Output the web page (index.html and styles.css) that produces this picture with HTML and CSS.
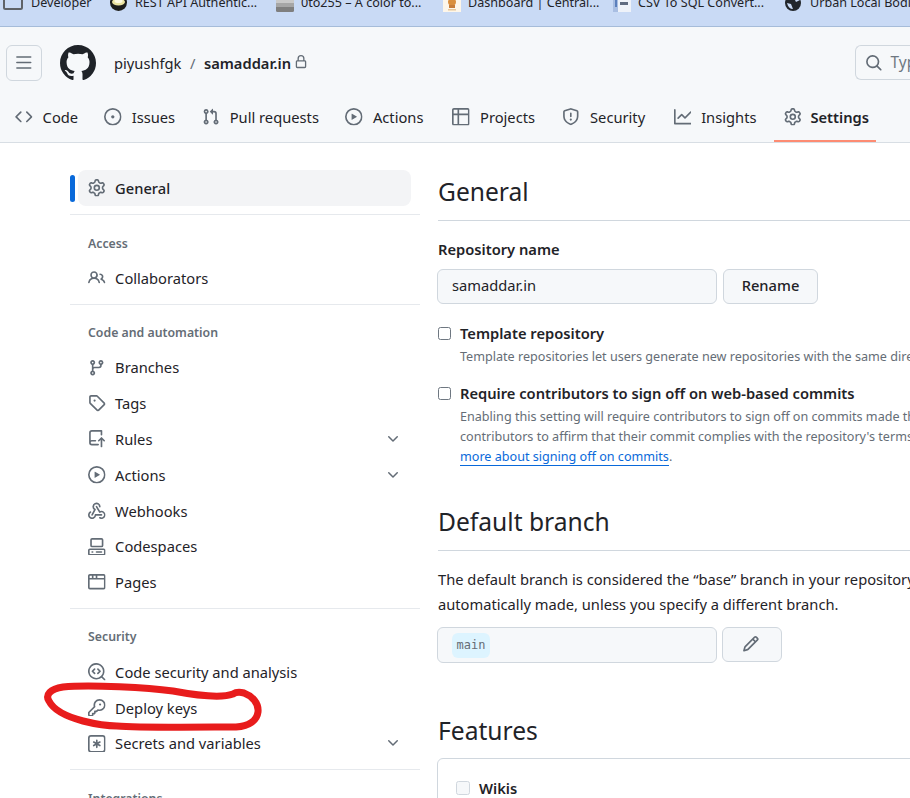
FILE: index.html
```html
<!DOCTYPE html>
<html lang="en">
<head>
<meta charset="utf-8">
<title>samaddar.in settings</title>
<link rel="stylesheet" href="styles.css">
</head>
<body>
<svg class="defs" width="0" height="0" aria-hidden="true">
<symbol id="i-bars" viewBox="0 0 16 16"><path d="M1 2.75A.75.75 0 0 1 1.75 2h12.5a.75.75 0 0 1 0 1.5H1.75A.75.75 0 0 1 1 2.75Zm0 5A.75.75 0 0 1 1.75 7h12.5a.75.75 0 0 1 0 1.5H1.75A.75.75 0 0 1 1 7.75ZM1.75 12h12.5a.75.75 0 0 1 0 1.5H1.75a.75.75 0 0 1 0-1.5Z"/></symbol>
<symbol id="i-mark" viewBox="0 0 16 16"><path d="M8 0c4.42 0 8 3.58 8 8a8.013 8.013 0 0 1-5.45 7.59c-.4.08-.55-.17-.55-.38 0-.27.01-1.13.01-2.2 0-.75-.25-1.23-.54-1.48 1.78-.2 3.65-.88 3.65-3.95 0-.88-.31-1.59-.82-2.15.08-.2.36-1.02-.08-2.12 0 0-.67-.22-2.2.82-.64-.18-1.32-.27-2-.27-.68 0-1.36.09-2 .27-1.53-1.03-2.2-.82-2.2-.82-.44 1.1-.16 1.92-.08 2.12-.51.56-.82 1.28-.82 2.15 0 3.06 1.86 3.75 3.64 3.95-.23.2-.44.55-.51 1.07-.46.21-1.61.55-2.33-.66-.15-.24-.6-.83-1.23-.82-.67.01-.27.38.01.53.34.19.73.9.82 1.13.16.45.68 1.31 2.69.94 0 .67.01 1.3.01 1.49 0 .21-.15.45-.55.38A7.995 7.995 0 0 1 0 8c0-4.42 3.58-8 8-8Z"/></symbol>
<symbol id="i-lock" viewBox="0 0 16 16"><path d="M4 4a4 4 0 0 1 8 0v2h.25c.966 0 1.75.784 1.75 1.75v5.5A1.75 1.75 0 0 1 12.25 15h-8.5A1.75 1.75 0 0 1 2 13.25v-5.5C2 6.784 2.784 6 3.75 6H4Zm8.25 3.5h-8.5a.25.25 0 0 0-.25.25v5.5c0 .138.112.25.25.25h8.5a.25.25 0 0 0 .25-.25v-5.5a.25.25 0 0 0-.25-.25ZM10.5 6V4a2.5 2.5 0 1 0-5 0v2Z"/></symbol>
<symbol id="i-search" viewBox="0 0 16 16"><path d="M10.68 11.74a6 6 0 0 1-7.922-8.982 6 6 0 0 1 8.982 7.922l3.04 3.04a.749.749 0 0 1-.326 1.275.749.749 0 0 1-.734-.215ZM11.5 7a4.499 4.499 0 1 0-8.997 0A4.499 4.499 0 0 0 11.5 7Z"/></symbol>
<symbol id="i-code" viewBox="0 0 16 16"><path d="m11.28 3.22 4.25 4.25a.75.75 0 0 1 0 1.06l-4.25 4.25a.749.749 0 0 1-1.275-.326.749.749 0 0 1 .215-.734L13.94 8l-3.72-3.72a.749.749 0 0 1 .326-1.275.749.749 0 0 1 .734.215Zm-6.56 0a.751.751 0 0 1 1.042.018.751.751 0 0 1 .018 1.042L2.06 8l3.72 3.72a.749.749 0 0 1-.326 1.275.749.749 0 0 1-.734-.215L.47 8.53a.75.75 0 0 1 0-1.06Z"/></symbol>
<symbol id="i-issue" viewBox="0 0 16 16"><path d="M8 9.5a1.5 1.5 0 1 0 0-3 1.5 1.5 0 0 0 0 3Z"/><path d="M8 0a8 8 0 1 1 0 16A8 8 0 0 1 8 0ZM1.5 8a6.5 6.5 0 1 0 13 0 6.5 6.5 0 0 0-13 0Z"/></symbol>
<symbol id="i-pr" viewBox="0 0 16 16"><path d="M1.5 3.25a2.25 2.25 0 1 1 3 2.122v5.256a2.251 2.251 0 1 1-1.5 0V5.372A2.25 2.25 0 0 1 1.5 3.25Zm5.677-.177L9.573.677A.25.25 0 0 1 10 .854V2.5h1A2.5 2.5 0 0 1 13.5 5v5.628a2.251 2.251 0 1 1-1.5 0V5a1 1 0 0 0-1-1h-1v1.646a.25.25 0 0 1-.427.177L7.177 3.427a.25.25 0 0 1 0-.354ZM3.75 2.5a.75.75 0 1 0 0 1.5.75.75 0 0 0 0-1.5Zm0 9.5a.75.75 0 1 0 0 1.5.75.75 0 0 0 0-1.5Zm8.25.75a.75.75 0 1 0 1.5 0 .75.75 0 0 0-1.5 0Z"/></symbol>
<symbol id="i-play" viewBox="0 0 16 16"><path d="M8 0a8 8 0 1 1 0 16A8 8 0 0 1 8 0ZM1.5 8a6.5 6.5 0 1 0 13 0 6.5 6.5 0 0 0-13 0Zm4.879-2.773 4.264 2.559a.25.25 0 0 1 0 .428l-4.264 2.559A.25.25 0 0 1 6 10.559V5.442a.25.25 0 0 1 .379-.215Z"/></symbol>
<symbol id="i-table" viewBox="0 0 16 16"><path d="M0 1.75C0 .784.784 0 1.75 0h12.5C15.216 0 16 .784 16 1.75v12.5A1.75 1.75 0 0 1 14.25 16H1.75A1.75 1.75 0 0 1 0 14.25ZM6.5 6.5v8h7.75a.25.25 0 0 0 .25-.25V6.5Zm8-1.5V1.75a.25.25 0 0 0-.25-.25H6.5V5ZM5 5V1.5H1.75a.25.25 0 0 0-.25.25V5ZM1.5 6.5v7.75c0 .138.112.25.25.25H5v-8Z"/></symbol>
<symbol id="i-shield" viewBox="0 0 16 16"><path d="M7.467.133a1.748 1.748 0 0 1 1.066 0l5.25 1.68A1.75 1.75 0 0 1 15 3.48V7c0 1.566-.32 3.182-1.303 4.682-.983 1.498-2.585 2.813-5.032 3.855a1.697 1.697 0 0 1-1.33 0c-2.447-1.042-4.049-2.357-5.032-3.855C1.32 10.182 1 8.566 1 7V3.48a1.75 1.75 0 0 1 1.217-1.667Zm.61 1.429a.25.25 0 0 0-.153 0l-5.25 1.68a.25.25 0 0 0-.174.238V7c0 1.358.275 2.666 1.057 3.86.784 1.194 2.121 2.34 4.366 3.297a.196.196 0 0 0 .154 0c2.245-.956 3.582-2.104 4.366-3.298C13.225 9.666 13.5 8.36 13.5 7V3.48a.251.251 0 0 0-.174-.237l-5.25-1.68ZM8.75 4.75v3a.75.75 0 0 1-1.5 0v-3a.75.75 0 0 1 1.5 0ZM9 10.5a1 1 0 1 1-2 0 1 1 0 0 1 2 0Z"/></symbol>
<symbol id="i-graph" viewBox="0 0 16 16"><path d="M1.5 1.75V13.5h13.75a.75.75 0 0 1 0 1.5H.75a.75.75 0 0 1-.75-.75V1.75a.75.75 0 0 1 1.5 0Zm14.28 2.53-5.25 5.25a.75.75 0 0 1-1.06 0L7 7.06 4.28 9.78a.751.751 0 0 1-1.042-.018.751.751 0 0 1-.018-1.042l3.25-3.25a.75.75 0 0 1 1.06 0L10 7.94l4.72-4.72a.751.751 0 0 1 1.042.018.751.751 0 0 1 .018 1.042Z"/></symbol>
<symbol id="i-gear" viewBox="0 0 16 16"><path d="M8 0a8.2 8.2 0 0 1 .701.031C9.444.095 9.99.645 10.16 1.29l.288 1.107c.018.066.079.158.212.224.231.114.454.243.668.386.123.082.233.09.299.071l1.103-.303c.644-.176 1.392.021 1.82.63.27.385.506.792.704 1.218.315.675.111 1.422-.364 1.891l-.814.806c-.049.048-.098.147-.088.294.016.257.016.515 0 .772-.01.147.038.246.088.294l.814.806c.475.469.679 1.216.364 1.891a7.977 7.977 0 0 1-.704 1.217c-.428.61-1.176.807-1.82.63l-1.102-.302c-.067-.019-.177-.011-.3.071a5.909 5.909 0 0 1-.668.386c-.133.066-.194.158-.211.224l-.29 1.106c-.168.646-.715 1.196-1.458 1.26a8.006 8.006 0 0 1-1.402 0c-.743-.064-1.289-.614-1.458-1.26l-.289-1.106c-.018-.066-.079-.158-.212-.224a5.738 5.738 0 0 1-.668-.386c-.123-.082-.233-.09-.299-.071l-1.103.303c-.644.176-1.392-.021-1.82-.63a8.12 8.12 0 0 1-.704-1.218c-.315-.675-.111-1.422.363-1.891l.815-.806c.05-.048.098-.147.088-.294a6.214 6.214 0 0 1 0-.772c.01-.147-.038-.246-.088-.294l-.815-.806C.635 6.045.431 5.298.746 4.623a7.92 7.92 0 0 1 .704-1.217c.428-.61 1.176-.807 1.82-.63l1.102.302c.067.019.177.011.3-.071.214-.143.437-.272.668-.386.133-.066.194-.158.211-.224l.29-1.106C6.009.645 6.556.095 7.299.03 7.53.01 7.764 0 8 0Zm-.571 1.525c-.036.003-.108.036-.137.146l-.289 1.105c-.147.561-.549.967-.998 1.189-.173.086-.34.183-.5.29-.417.278-.97.423-1.529.27l-1.103-.303c-.109-.03-.175.016-.195.045-.22.312-.412.644-.573.99-.014.031-.021.11.059.19l.815.806c.411.406.562.957.53 1.456a4.709 4.709 0 0 0 0 .582c.032.499-.119 1.05-.53 1.456l-.815.806c-.081.08-.073.159-.059.19.162.346.353.677.573.989.02.03.085.076.195.046l1.102-.303c.56-.153 1.113-.008 1.53.27.161.107.328.204.501.29.447.222.85.629.997 1.189l.289 1.105c.029.109.101.143.137.146a6.6 6.6 0 0 0 1.142 0c.036-.003.108-.036.137-.146l.289-1.105c.147-.561.549-.967.998-1.189.173-.086.34-.183.5-.29.417-.278.97-.423 1.529-.27l1.103.303c.109.029.175-.016.195-.045.22-.313.411-.644.573-.99.014-.031.021-.11-.059-.19l-.815-.806c-.411-.406-.562-.957-.53-1.456a4.709 4.709 0 0 0 0-.582c-.032-.499.119-1.05.53-1.456l.815-.806c.081-.08.073-.159.059-.19a6.464 6.464 0 0 0-.573-.989c-.02-.03-.085-.076-.195-.046l-1.102.303c-.56.153-1.113.008-1.53-.27a4.44 4.44 0 0 0-.501-.29c-.447-.222-.85-.629-.997-1.189l-.289-1.105c-.029-.11-.101-.143-.137-.146a6.6 6.6 0 0 0-1.142 0ZM11 8a3 3 0 1 1-6 0 3 3 0 0 1 6 0ZM9.5 8a1.5 1.5 0 1 0-3.001.001A1.5 1.5 0 0 0 9.5 8Z"/></symbol>
<symbol id="i-people" viewBox="0 0 16 16"><path d="M2 5.5a3.5 3.5 0 1 1 5.898 2.549 5.508 5.508 0 0 1 3.034 4.084.75.75 0 1 1-1.482.235 4 4 0 0 0-7.9 0 .75.75 0 0 1-1.482-.236A5.507 5.507 0 0 1 3.102 8.05 3.493 3.493 0 0 1 2 5.5ZM11 4a3.001 3.001 0 0 1 2.22 5.018 5.01 5.01 0 0 1 2.56 3.012.749.749 0 0 1-.885.954.752.752 0 0 1-.549-.514 3.507 3.507 0 0 0-2.522-2.372.75.75 0 0 1-.574-.73v-.352a.75.75 0 0 1 .416-.672A1.5 1.5 0 0 0 11 5.5.75.75 0 0 1 11 4Zm-5.5-.5a2 2 0 1 0-.001 3.999A2 2 0 0 0 5.5 3.5Z"/></symbol>
<symbol id="i-branch" viewBox="0 0 16 16"><path d="M9.5 3.25a2.25 2.25 0 1 1 3 2.122V6A2.5 2.5 0 0 1 10 8.5H6a1 1 0 0 0-1 1v1.128a2.251 2.251 0 1 1-1.5 0V5.372a2.25 2.25 0 1 1 1.5 0v1.836A2.493 2.493 0 0 1 6 7h4a1 1 0 0 0 1-1v-.628A2.25 2.25 0 0 1 9.5 3.25Zm-6 0a.75.75 0 1 0 1.5 0 .75.75 0 0 0-1.5 0Zm8.25-.75a.75.75 0 1 0 0 1.5.75.75 0 0 0 0-1.5ZM4.25 12a.75.75 0 1 0 0 1.5.75.75 0 0 0 0-1.5Z"/></symbol>
<symbol id="i-tag" viewBox="0 0 16 16"><path d="M1 7.775V2.75C1 1.784 1.784 1 2.75 1h5.025c.464 0 .91.184 1.238.513l6.25 6.25a1.75 1.75 0 0 1 0 2.474l-5.026 5.026a1.75 1.75 0 0 1-2.474 0l-6.25-6.25A1.752 1.752 0 0 1 1 7.775Zm1.5 0c0 .066.026.13.073.177l6.25 6.25a.25.25 0 0 0 .354 0l5.025-5.025a.25.25 0 0 0 0-.354l-6.25-6.25a.25.25 0 0 0-.177-.073H2.75a.25.25 0 0 0-.25.25ZM6 5a1 1 0 1 1 0 2 1 1 0 0 1 0-2Z"/></symbol>
<symbol id="i-push" viewBox="0 0 16 16"><path d="M1 2.5A2.5 2.5 0 0 1 3.5 0h8.75a.75.75 0 0 1 .75.75v3.5a.75.75 0 0 1-1.5 0V1.5h-8a1 1 0 0 0-1 1v6.708A2.493 2.493 0 0 1 3.5 9h3.25a.75.75 0 0 1 0 1.5H3.5a1 1 0 0 0 0 2h5.75a.75.75 0 0 1 0 1.5H3.5A2.5 2.5 0 0 1 1 11.5Zm13.23 7.79h-.001l-1.224-1.224v6.184a.75.75 0 0 1-1.5 0V9.066L10.28 10.29a.75.75 0 0 1-1.06-1.061l2.505-2.504a.75.75 0 0 1 1.06 0L15.29 9.23a.751.751 0 0 1-.018 1.042.751.751 0 0 1-1.042.018Z"/></symbol>
<symbol id="i-webhook" viewBox="0 0 16 16"><path d="M5.5 4.25a2.25 2.25 0 0 1 4.5 0 .75.75 0 0 0 1.5 0 3.75 3.75 0 1 0-6.14 2.889l-2.272 4.258a.75.75 0 0 0 1.324.706L7 7.25a.75.75 0 0 0-.309-1.015A2.25 2.25 0 0 1 5.5 4.25Z"/><path d="M7.364 3.607a.75.75 0 0 1 1.03.257l2.608 4.349a3.75 3.75 0 1 1-.628 6.785.75.75 0 0 1 .752-1.299 2.25 2.25 0 1 0-.033-3.88.75.75 0 0 1-1.03-.256L7.107 4.636a.75.75 0 0 1 .257-1.03Z"/><path d="M2.9 8.776A.75.75 0 0 1 2.625 9.8 2.25 2.25 0 1 0 6 11.75a.75.75 0 0 1 .75-.751h5.5a.75.75 0 0 1 0 1.5H7.425a3.751 3.751 0 1 1-5.55-3.998.75.75 0 0 1 1.024.274Z"/></symbol>
<symbol id="i-codespaces" viewBox="0 0 16 16"><path d="M0 11.25c0-.966.784-1.75 1.75-1.75h12.5c.966 0 1.75.784 1.75 1.75v3A1.75 1.75 0 0 1 14.25 16H1.75A1.75 1.75 0 0 1 0 14.25Zm2-9.5C2 .784 2.784 0 3.75 0h8.5C13.216 0 14 .784 14 1.75v5a1.75 1.75 0 0 1-1.75 1.75h-8.5A1.75 1.75 0 0 1 2 6.75Zm1.75-.25a.25.25 0 0 0-.25.25v5c0 .138.112.25.25.25h8.5a.25.25 0 0 0 .25-.25v-5a.25.25 0 0 0-.25-.25Zm-2 9.5a.25.25 0 0 0-.25.25v3c0 .138.112.25.25.25h12.5a.25.25 0 0 0 .25-.25v-3a.25.25 0 0 0-.25-.25Z"/><path d="M7 12.75a.75.75 0 0 1 .75-.75h4.5a.75.75 0 0 1 0 1.5h-4.5a.75.75 0 0 1-.75-.75Zm-4 0a.75.75 0 0 1 .75-.75h.5a.75.75 0 0 1 0 1.5h-.5a.75.75 0 0 1-.75-.75Z"/></symbol>
<symbol id="i-browser" viewBox="0 0 16 16"><path d="M0 2.75C0 1.784.784 1 1.75 1h12.5c.966 0 1.75.784 1.75 1.750v10.5A1.75 1.75 0 0 1 14.25 15H1.75A1.75 1.75 0 0 1 0 13.25ZM14.5 6h-13v7.25c0 .138.112.25.25.25h12.5a.25.25 0 0 0 .25-.25Zm-6-3.5v2h6V2.75a.25.25 0 0 0-.25-.25ZM5 2.5v2h2v-2Zm-3.25 0a.25.25 0 0 0-.25.25V4.5h2v-2Z"/></symbol>
<symbol id="i-codescan" viewBox="0 0 16 16"><path d="M8.47 4.97a.75.75 0 0 0 0 1.06L9.94 7.5 8.47 8.97a.75.75 0 1 0 1.06 1.06l2-2a.75.75 0 0 0 0-1.06l-2-2a.75.75 0 0 0-1.06 0ZM6.53 6.03a.75.75 0 0 0-1.06-1.06l-2 2a.75.75 0 0 0 0 1.06l2 2a.75.75 0 1 0 1.06-1.06L5.06 7.5l1.47-1.47Z"/><path d="M12.246 13.307a7.501 7.501 0 1 1 1.06-1.06l2.474 2.473a.749.749 0 0 1-.326 1.275.749.749 0 0 1-.734-.215ZM1.5 7.5a6.002 6.002 0 0 0 3.608 5.504 6.002 6.002 0 0 0 6.486-1.117.75.75 0 0 1 .293-.293A6.002 6.002 0 0 0 7.5 1.5a6 6 0 0 0-6 6Z"/></symbol>
<symbol id="i-key" viewBox="0 0 16 16"><path d="M10.5 0a5.499 5.499 0 1 1-1.288 10.848l-.932.932a.749.749 0 0 1-.53.22H7v.75a.749.749 0 0 1-.22.53l-.5.5a.749.749 0 0 1-.53.22H5v.75a.749.749 0 0 1-.22.53l-.5.5a.749.749 0 0 1-.53.22h-2A1.75 1.75 0 0 1 0 14.25v-2c0-.199.079-.389.22-.53l4.932-4.932A5.5 5.5 0 0 1 10.5 0Zm-4 5.5c-.001.431.069.86.205 1.269a.75.75 0 0 1-.181.768L1.5 12.56v1.69c0 .138.112.25.25.25h1.69l.06-.06v-1.19a.75.75 0 0 1 .75-.75h1.19l.06-.06v-1.19a.75.75 0 0 1 .75-.75h1.19l1.023-1.025a.75.75 0 0 1 .768-.18A4 4 0 1 0 6.5 5.5ZM11 6a1 1 0 1 1 0-2 1 1 0 0 1 0 2Z"/></symbol>
<symbol id="i-asterisk" viewBox="0 0 16 16"><path d="M0 2.75A2.75 2.75 0 0 1 2.75 0h10.5A2.75 2.75 0 0 1 16 2.75v10.5A2.75 2.75 0 0 1 13.25 16H2.75A2.75 2.75 0 0 1 0 13.25ZM2.75 1.5c-.69 0-1.25.56-1.25 1.25v10.5c0 .69.56 1.25 1.25 1.25h10.5c.69 0 1.25-.56 1.25-1.25V2.75c0-.69-.56-1.25-1.25-1.25Z"/><path d="M8 4a.75.75 0 0 1 .75.75V6.7l1.69-.975a.75.75 0 0 1 .75 1.3L9.5 8l1.69.976a.75.75 0 0 1-.75 1.298L8.75 9.3v1.951a.75.75 0 0 1-1.5 0V9.299l-1.69.976a.75.75 0 0 1-.75-1.3L6.5 8l-1.69-.975a.75.75 0 0 1 .75-1.3l1.69.976V4.75A.75.75 0 0 1 8 4Z"/></symbol>
<symbol id="i-chevron" viewBox="0 0 16 16"><path d="M12.78 5.22a.749.749 0 0 1 0 1.06l-4.25 4.25a.749.749 0 0 1-1.06 0L3.22 6.28a.749.749 0 1 1 1.06-1.06L8 8.939l3.72-3.719a.749.749 0 0 1 1.06 0Z"/></symbol>
<symbol id="i-pencil" viewBox="0 0 16 16"><path d="M11.013 1.427a1.75 1.75 0 0 1 2.474 0l1.086 1.086a1.75 1.75 0 0 1 0 2.474l-8.61 8.61c-.21.21-.47.364-.756.445l-3.251.93a.75.75 0 0 1-.927-.928l.929-3.25c.081-.286.235-.547.445-.758l8.61-8.61Zm.176 4.823L9.75 4.81l-6.286 6.287a.253.253 0 0 0-.064.108l-.558 1.953 1.953-.558a.253.253 0 0 0 .108-.064Zm1.238-3.763a.25.25 0 0 0-.354 0L10.811 3.75l1.439 1.44 1.263-1.263a.25.25 0 0 0 0-.354Z"/></symbol>
</svg>

<div class="bookmarks">
  <div class="bm"><svg class="bm-ico wide" viewBox="0 0 20 18"><path class="folder" d="M1 2h18v12.500a1.500 1.500 0 0 1-1.500 1.500h-15A1.500 1.500 0 0 1 1 14.500Z"/></svg><span>Developer</span></div>
  <div class="bm"><svg class="bm-ico" viewBox="0 0 18 18"><circle cx="8.500" cy="9.500" r="8.500" fill="#1d1d1b"/><ellipse cx="8.500" cy="9" rx="6.500" ry="3.500" fill="#ebe3a0"/><ellipse cx="8.500" cy="8" rx="4" ry="2" fill="#fffbe0"/></svg><span>REST API Authentic...</span></div>
  <div class="bm"><svg class="bm-ico" viewBox="0 0 18 18"><path d="M0 5h18v5H0Z" fill="#c9c9c9"/><path d="M0 10h18v4H0Z" fill="#a6a6a6"/><path d="M0 14h18v3.500a1.500 1.500 0 0 1-1.500 1.500h-15A1.500 1.500 0 0 1 0 17.500Z" fill="#7f7f7f"/></svg><span>0to255 – A color to...</span></div>
  <div class="bm"><svg class="bm-ico" viewBox="0 0 18 18"><rect y="5" width="18" height="14" fill="#fdf6ea"/><ellipse cx="9" cy="9" rx="4" ry="3.500" fill="#d98f3e"/><rect x="6" y="12" width="6" height="3" fill="#c77d3a"/><rect x="5" y="16" width="8" height="1.500" fill="#e8c79a"/></svg><span>Dashboard | Central...</span></div>
  <div class="bm"><svg class="bm-ico" viewBox="0 0 18 18"><rect y="5" width="18" height="14" fill="#eef2f9"/><rect y="5" width="5" height="14" fill="#a9bee2"/><rect x="2" y="5" width="2" height="9" fill="#5b7fbc"/><rect x="7" y="9" width="8" height="3" fill="#5f6b80"/></svg><span>CSV To SQL Convert...</span></div>
  <div class="bm"><svg class="bm-ico" viewBox="0 0 18 18"><circle cx="8" cy="10" r="8" fill="#22262b"/><path d="M9 3c3 .5 5 2 6 4l-4 2c-1-2-2-4-2-6ZM2 10l4 1 2 5c-3 0-5-2-6-6Z" fill="#c9daf5"/></svg><span>Urban Local Bodi</span></div>
</div>

<header class="app-header">
  <div class="top-row">
    <button class="menu-btn" type="button"><svg class="ico"><use href="#i-bars"/></svg></button>
    <svg class="logo"><use href="#i-mark"/></svg>
    <nav class="crumbs">
      <span>piyushfgk</span>
      <span class="slash">/</span>
      <strong>samaddar.in</strong>
      <svg class="lock"><use href="#i-lock"/></svg>
    </nav>
    <div class="search"><svg class="ico"><use href="#i-search"/></svg><span>Type</span></div>
  </div>
  <nav class="tabs">
    <a class="tab t-code"><svg class="ico"><use href="#i-code"/></svg>Code</a>
    <a class="tab t-issues"><svg class="ico"><use href="#i-issue"/></svg>Issues</a>
    <a class="tab t-pr"><svg class="ico"><use href="#i-pr"/></svg>Pull requests</a>
    <a class="tab t-actions"><svg class="ico"><use href="#i-play"/></svg>Actions</a>
    <a class="tab t-projects"><svg class="ico"><use href="#i-table"/></svg>Projects</a>
    <a class="tab t-security"><svg class="ico"><use href="#i-shield"/></svg>Security</a>
    <a class="tab t-insights"><svg class="ico"><use href="#i-graph"/></svg>Insights</a>
    <a class="tab t-settings active"><svg class="ico"><use href="#i-gear"/></svg>Settings</a>
  </nav>
</header>

<div class="layout">
  <aside class="side">
    <div class="group first">
      <a class="item current"><svg class="ico"><use href="#i-gear"/></svg>General</a>
    </div>
    <div class="group">
      <h3>Access</h3>
      <a class="item"><svg class="ico"><use href="#i-people"/></svg>Collaborators</a>
    </div>
    <div class="group">
      <h3>Code and automation</h3>
      <a class="item"><svg class="ico"><use href="#i-branch"/></svg>Branches</a>
      <a class="item"><svg class="ico"><use href="#i-tag"/></svg>Tags</a>
      <a class="item"><svg class="ico"><use href="#i-push"/></svg>Rules<svg class="chev"><use href="#i-chevron"/></svg></a>
      <a class="item"><svg class="ico"><use href="#i-play"/></svg>Actions<svg class="chev"><use href="#i-chevron"/></svg></a>
      <a class="item"><svg class="ico"><use href="#i-webhook"/></svg>Webhooks</a>
      <a class="item"><svg class="ico"><use href="#i-codespaces"/></svg>Codespaces</a>
      <a class="item"><svg class="ico"><use href="#i-browser"/></svg>Pages</a>
    </div>
    <div class="group">
      <h3>Security</h3>
      <a class="item"><svg class="ico"><use href="#i-codescan"/></svg>Code security and analysis</a>
      <a class="item"><svg class="ico"><use href="#i-key"/></svg>Deploy keys</a>
      <a class="item"><svg class="ico"><use href="#i-asterisk"/></svg>Secrets and variables<svg class="chev"><use href="#i-chevron"/></svg></a>
    </div>
    <div class="group">
      <h3>Integrations</h3>
    </div>
  </aside>

  <main class="content">
    <h2 class="title">General</h2>
    <label class="label">Repository name</label>
    <div class="field-row">
      <div class="input">samaddar.in</div>
      <button class="btn" type="button">Rename</button>
    </div>
    <div class="check first-check">
      <span class="box"></span>
      <div>
        <div class="check-title">Template repository</div>
        <p class="note">Template repositories let users generate new repositories with the same directory structure and files.</p>
      </div>
    </div>
    <div class="check second-check">
      <span class="box"></span>
      <div>
        <div class="check-title">Require contributors to sign off on web-based commits</div>
        <p class="note">Enabling this setting will require contributors to sign off on commits made through GitHub</p>
        <p class="note">contributors to affirm that their commit complies with the repository's terms, commonly</p>
        <p class="note"><a class="link">more about signing off on commits</a>.</p>
      </div>
    </div>

    <h2 class="title branch-title">Default branch</h2>
    <p class="para">The default branch is considered the “base” branch in your repository, against which all</p>
    <p class="para">automatically made, unless you specify a different branch.</p>
    <div class="field-row branch-row">
      <div class="input branch-input"><code class="chip">main</code></div>
      <button class="btn icon-btn" type="button"><svg class="ico"><use href="#i-pencil"/></svg></button>
    </div>

    <h2 class="title features-title">Features</h2>
    <section class="card">
      <span class="box disabled"></span>
      <span class="check-title">Wikis</span>
    </section>
  </main>
</div>

<svg class="scribble" viewBox="0 0 910 798" aria-hidden="true"><path d="M233 694C225 697 205 697 173 691C150 688 90 684 63 687C50 689 45 695 49 701C54 711 68 717 83 721C95 724 105 726 117 726C140 728 210 727 236 727C250 726 257 720 258 712C259 703 252 696 244 693C240 692 236 692 233 694Z"/></svg>
</body>
</html>
```
FILE: styles.css
```css
* { box-sizing: border-box; }
html, body { margin: 0; padding: 0; }
body {
  position: relative;
  width: 910px;
  height: 798px;
  overflow: hidden;
  background: #fff;
  color: #1f2328;
  font-family: "Noto Sans", "Liberation Sans", sans-serif;
  font-size: 14.7px;
}
.defs { position: absolute; }
svg { fill: currentColor; flex: none; }
p, h2, h3 { margin: 0; font-weight: 400; }
a { color: inherit; text-decoration: none; }
button { font-family: inherit; }

/* bookmarks */
.bookmarks {
  height: 27px;
  padding-left: 3px;
  background: #c9daf5;
  border-bottom: 1px solid #a6bcd9;
  display: grid;
  grid-template-columns: 107px 166px 167px 170px 172px 1fr;
  overflow: hidden;
  color: #1f2328;
  font-size: 12.6px;
}
.bm { display: flex; align-items: flex-start; gap: 7px; margin-top: -7px; white-space: nowrap; line-height: 20px; }
.bm-ico { width: 18px; height: 18px; overflow: visible; }
.bm-ico.wide { width: 20px; margin-right: 1px; }
.folder { fill: none; stroke: #5f6368; stroke-width: 2; }

/* header */
.app-header { height: 116px; background: #f6f8fa; border-bottom: 1px solid #d8dee4; }
.top-row { height: 69px; padding: 18px 0 0 6px; display: flex; align-items: flex-start; }
.menu-btn {
  width: 36px; height: 36px; padding: 0;
  display: flex; align-items: center; justify-content: center;
  background: transparent; border: 1px solid #d0d7de; border-radius: 6px; color: #636c76;
}
.ico { width: 17.6px; height: 17.6px; color: #636c76; }
.logo { width: 36px; height: 36px; margin-left: 18px; color: #1f2328; }
.crumbs { margin-left: 18px; height: 36px; display: flex; align-items: center; color: #1f2328; }
.slash { margin: 0 8.5px; color: #636c76; }
.crumbs strong { font-weight: 600; }
.lock { width: 14px; height: 14px; margin-left: 3px; margin-top: -3px; color: #636c76; }
.search {
  margin-left: auto; width: 56px; height: 35px; padding-left: 9px;
  margin-right: -1px;
  display: flex; align-items: center; gap: 8px;
  border: 1px solid #d0d7de; border-right: 0; border-radius: 6px 0 0 6px;
  overflow: hidden; color: #6e7781; white-space: nowrap; font-size: 15.4px;
}
.tabs { display: flex; height: 46px; padding-left: 15px; position: relative; }
.tab { display: flex; align-items: center; gap: 10px; height: 44px; padding-bottom: 2px; white-space: nowrap; }
.t-issues { margin-left: 26px; }
.t-pr { margin-left: 27px; }
.t-actions { margin-left: 26.4px; }
.t-projects { margin-left: 29px; }
.t-security { margin-left: 27.4px; }
.t-insights { margin-left: 28.4px; }
.t-settings { margin-left: 27.4px; }
.tab.active { font-weight: 600; position: relative; gap: 9px; }
.tab.active::after {
  content: ""; position: absolute; left: -10px; right: -7px; bottom: -2px; height: 2px;
  background: #fd8c73;
}

/* layout */
.layout { display: flex; padding-top: 27px; }
.side { width: 350px; margin-left: 70px; flex: none; }
.group { border-top: 1px solid #e6e9ed; padding-top: 8px; padding-bottom: 7.3px; }
.group.first { border-top: 0; padding: 0 0 8px; }
.group h3 { font-size: 12.3px; font-weight: 600; color: #656d76; padding: 10.5px 0 0 18px; line-height: 20px; height: 37.5px; }
.item { display: flex; align-items: center; gap: 9.5px; height: 35.8px; padding: 0 19px 1px 18px; }
.chev { width: 16px; height: 16px; margin-left: auto; color: #636c76; }
.item.current {
  position: relative; margin-left: 8px; padding: 0 0 0 10px; width: 333px;
  height: 36px; background: #f3f4f6; border-radius: 8px; font-weight: 500;
}
.item.current::before {
  content: ""; position: absolute; left: -8px; top: 5px; width: 5px; height: 27px;
  background: #0969da; border-radius: 6px;
}

/* main */
.content { margin-left: 17px; padding-left: 1px; flex: 1; min-width: 0; overflow: hidden; white-space: nowrap; }
.title { font-size: 24.6px; line-height: 36px; height: 51px; padding-top: 4px; border-bottom: 1px solid #d0d7de; color: #1f2328; }
.label { display: block; margin-top: 17px; font-weight: 600; line-height: 22px; }
.field-row { display: flex; gap: 6px; margin-top: 9px; margin-left: -1px; }
.input {
  width: 280px; height: 35px; padding-left: 14px; line-height: 31px;
  background: #f6f8fa; border: 1px solid #d0d7de; border-radius: 6px;
}
.btn {
  width: 95px; height: 35px; padding: 0 0 3px; font-size: 14.7px; font-weight: 500; color: #1f2328;
  background: #f6f8fa; border: 1px solid #d0d7de; border-radius: 6px;
}
.check { display: flex; gap: 9px; }
.first-check { margin-top: 18px; }
.second-check { margin-top: 15px; }
.box {
  width: 13px; height: 13px; margin-top: 5px; flex: none; background: #fff;
  border: 1px solid #6e7781; border-radius: 2.5px;
}
.box.disabled { border-color: #d0d7de; background: #f6f8fa; }
.check-title { font-weight: 600; line-height: 22px; display: block; }
.check-title + .note { margin-top: 3px; }
.note { font-size: 12.6px; line-height: 20px; color: #656d76; }
.link { color: #0969da; border-bottom: 1px solid #0969da; }
.branch-title { margin-top: 33px; }
.para { line-height: 25px; }
.branch-title + .para { margin-top: 16px; }
.branch-row { margin-top: 10px; gap: 5px; align-items: flex-start; }
.branch-input { height: 36px; padding-left: 14px; display: flex; align-items: center; }
.chip {
  display: block; width: 38px; height: 25px; line-height: 25px; text-align: center;
  background: #ddf4ff; border-radius: 6px; color: #656d76;
  font-family: "DejaVu Sans Mono", "Liberation Mono", monospace; font-size: 12px;
}
.icon-btn { width: 60px; display: flex; align-items: center; justify-content: center; padding: 0 3px 2px 0; }
.features-title { margin-top: 46px; border-bottom: 0; height: 49px; }
.card {
  width: 600px; height: 60px; padding: 15px 18px; margin-left: -1px;
  border: 1px solid #d0d7de; border-radius: 6px;
  display: flex; gap: 9px; align-items: flex-start;
}
.card .box { width: 14px; height: 14px; margin-top: 7px; }
.card .check-title { margin-top: 3px; }

/* annotation */
.scribble {
  position: absolute; left: 0; top: 0; width: 910px; height: 798px; pointer-events: none;
  fill: none; stroke: #e81c1c; stroke-width: 7; stroke-linecap: round; stroke-linejoin: round;
}
```
